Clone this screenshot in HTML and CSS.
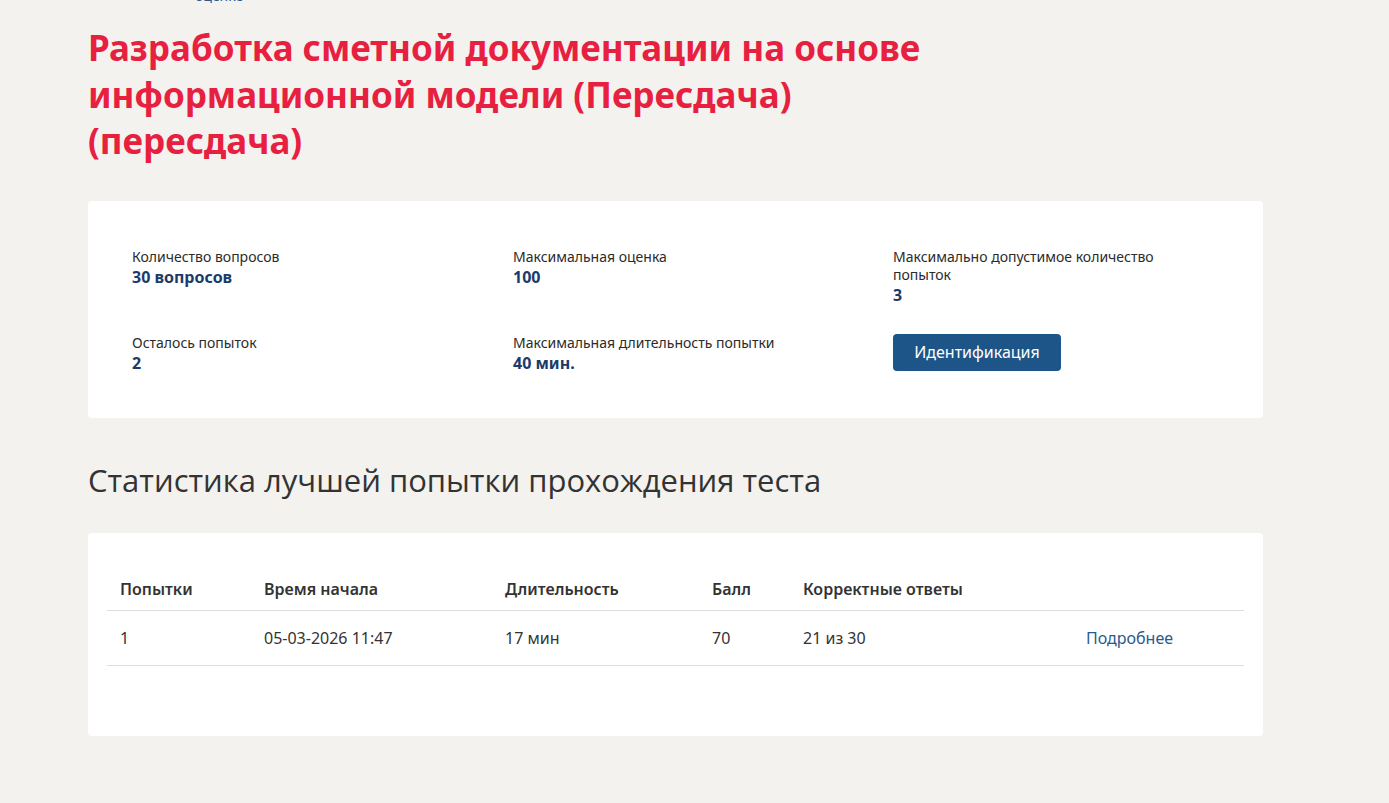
FILE: index.html
```html
<!DOCTYPE html>
<html lang="ru">
<head>
<meta charset="utf-8">
<title>Тест</title>
<link rel="stylesheet" href="styles.css">
</head>
<body>
<div class="page">
  <div class="crumb"><a href="#">оценке</a></div>
  <h1 class="title">Разработка сметной документации на основе информационной модели (Пересдача) (пересдача)</h1>

  <section class="card info">
    <div class="info-grid">
      <div class="item">
        <div class="label">Количество вопросов</div>
        <div class="value">30 вопросов</div>
      </div>
      <div class="item">
        <div class="label">Максимальная оценка</div>
        <div class="value">100</div>
      </div>
      <div class="item">
        <div class="label">Максимально допустимое количество попыток</div>
        <div class="value">3</div>
      </div>
      <div class="item">
        <div class="label">Осталось попыток</div>
        <div class="value">2</div>
      </div>
      <div class="item">
        <div class="label">Максимальная длительность попытки</div>
        <div class="value">40 мин.</div>
      </div>
      <div class="item">
        <button class="btn" type="button">Идентификация</button>
      </div>
    </div>
  </section>

  <h2 class="subtitle">Статистика лучшей попытки прохождения теста</h2>

  <section class="card stats">
    <table class="table">
      <colgroup>
        <col class="c1"><col class="c2"><col class="c3"><col class="c4"><col class="c5"><col>
      </colgroup>
      <thead>
        <tr>
          <th>Попытки</th>
          <th>Время начала</th>
          <th>Длительность</th>
          <th>Балл</th>
          <th>Корректные ответы</th>
          <th></th>
        </tr>
      </thead>
      <tbody>
        <tr>
          <td>1</td>
          <td>05-03-2026 11:47</td>
          <td>17 мин</td>
          <td>70</td>
          <td>21 из 30</td>
          <td><a class="link" href="#">Подробнее</a></td>
        </tr>
      </tbody>
    </table>
  </section>
</div>
</body>
</html>
```

FILE: styles.css
```css
html, body {
  margin: 0;
  padding: 0;
  background: #f3f2ef;
}
body {
  font-family: "Noto Sans", "Open Sans", sans-serif;
  color: #333;
}
.page {
  width: 1175px;
  margin-left: 88px;
  padding-bottom: 60px;
}
.crumb {
  margin-top: -12px;
  height: 16px;
  padding-left: 107px;
  font-size: 14px;
  line-height: 16px;
}
.crumb a {
  color: #2a5a8c;
  text-decoration: none;
}
.title {
  margin: 21px 0 0;
  max-width: 870px;
  font-family: "Noto Sans", sans-serif;
  font-weight: 700;
  font-size: 35px;
  line-height: 46.5px;
  color: #e8203f;
}
.card {
  background: #fff;
  border-radius: 4px;
}
.info {
  margin-top: 36px;
  padding: 47px 44px 44px;
}
.info-grid {
  display: grid;
  grid-template-columns: 381px 380px 280px;
  row-gap: 28px;
}
.label {
  font-size: 14px;
  line-height: 18px;
  color: #2b2b2b;
}
.value {
  font-size: 16px;
  font-weight: 700;
  line-height: 22px;
  color: #1b3b6b;
}
.btn {
  display: block;
  width: 168px;
  height: 37px;
  padding: 0;
  border: 0;
  border-radius: 4px;
  background: #1d5589;
  color: #fff;
  font-family: "Noto Sans", sans-serif;
  font-size: 16px;
  line-height: 37px;
  cursor: pointer;
}
.subtitle {
  margin: 42px 0 0;
  font-family: "Open Sans", sans-serif;
  font-weight: 400;
  font-size: 31px;
  line-height: 40px;
  color: #333;
}
.stats {
  margin-top: 33px;
  padding: 20px 19px 70px;
}
.table {
  width: 100%;
  border-collapse: collapse;
  font-size: 16px;
  line-height: 22px;
}
.c1 { width: 144px; }
.c2 { width: 241px; }
.c3 { width: 207px; }
.c4 { width: 91px; }
.c5 { width: 283px; }
.table th {
  text-align: left;
  font-weight: 600;
  padding: 25px 13px 10px;
  border-bottom: 1px solid #dedede;
  color: #333;
}
.table td {
  padding: 16px 13px;
  border-bottom: 1px solid #dedede;
  color: #333;
}
.link {
  color: #2a5a8c;
  text-decoration: none;
}
```
